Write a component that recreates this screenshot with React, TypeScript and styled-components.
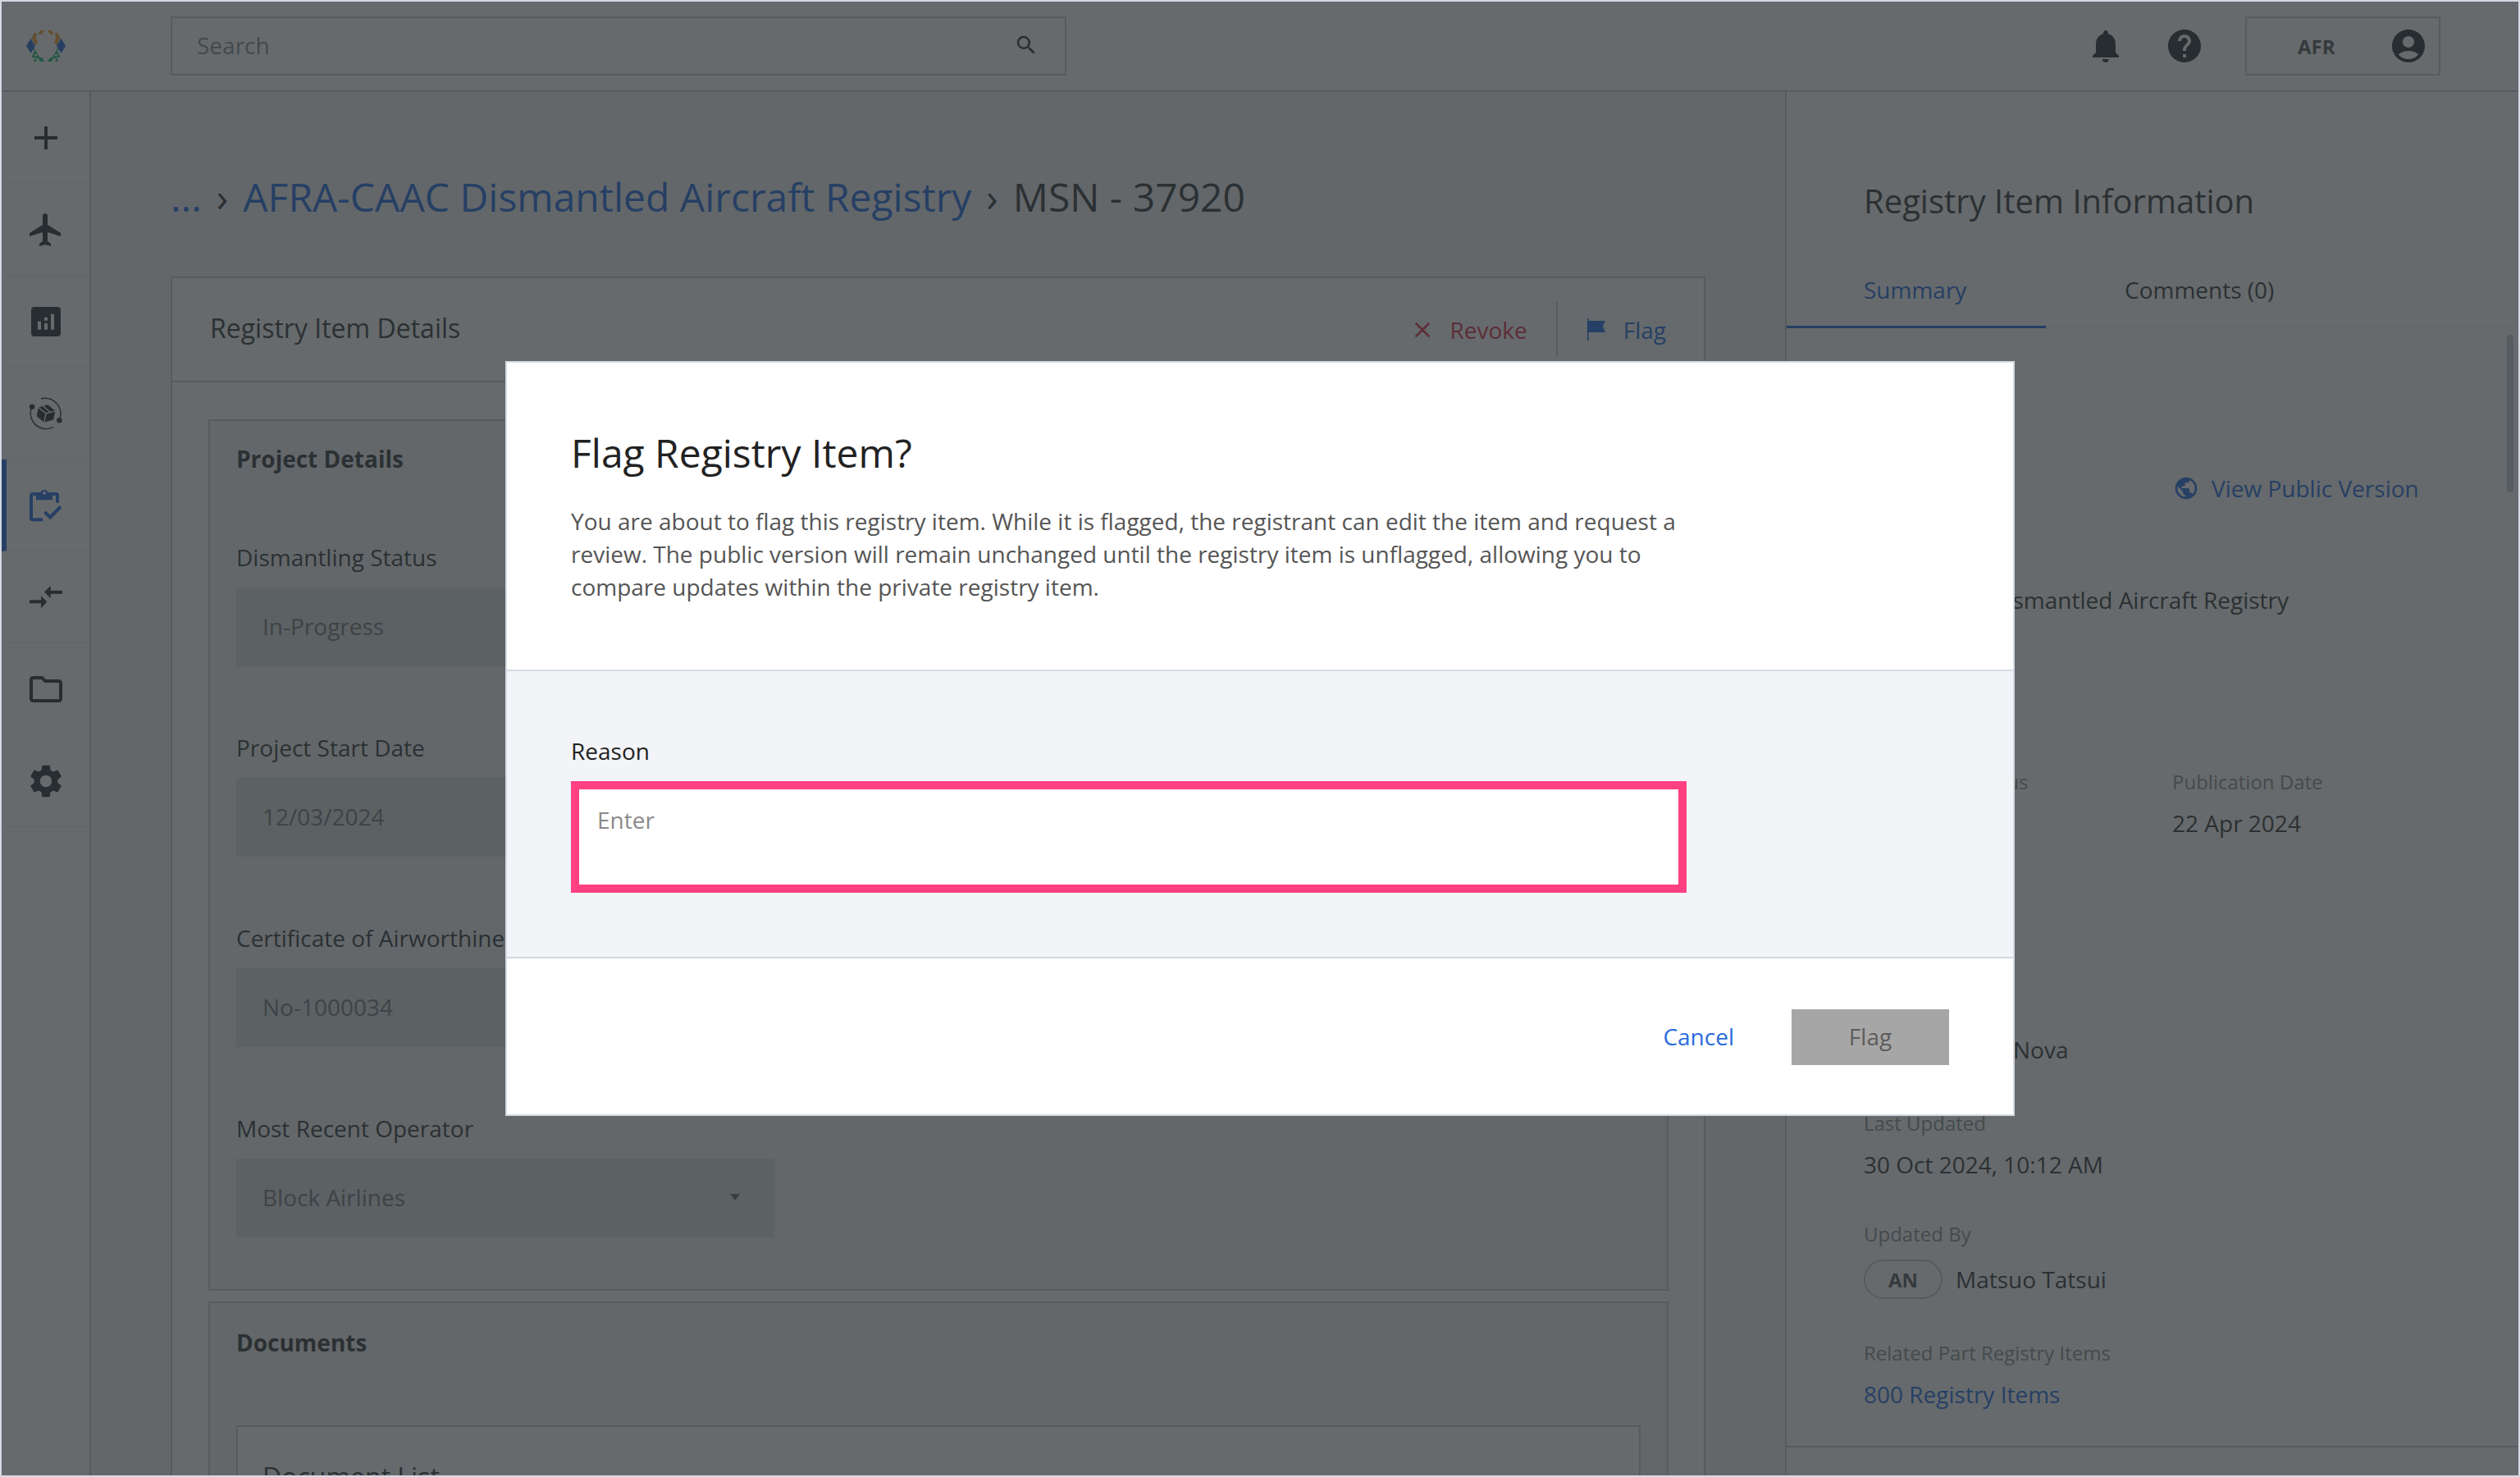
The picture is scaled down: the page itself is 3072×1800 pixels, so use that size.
import styled, { createGlobalStyle } from 'styled-components'
import {
  MdAdd,
  MdAccountCircle,
  MdClose,
  MdFlight,
  MdHelp,
  MdNotifications,
  MdOutlineFolder,
  MdPublic,
  MdSearch,
  MdSettings,
} from 'react-icons/md'

const Global = createGlobalStyle`
  html, body { margin: 0; padding: 0; background: #fff; }
  * { box-sizing: border-box; }
  body { font-family: "Open Sans", "Noto Sans", sans-serif; color: #3a3e42; }
`

const blue = '#2b70e4'
const line = '#c8ccd2'
const ink = '#3a3e42'
const iconInk = '#2e3236'

const Frame = styled.div`
  position: relative;
  width: 3072px;
  height: 1800px;
  border: 2px solid #d5d9e2;
  overflow: hidden;
  display: flex;
  flex-direction: column;
  background: #fff;
`

const TopBar = styled.header`
  height: 110px;
  flex: none;
  display: flex;
  align-items: center;
  padding: 0 95px 0 30px;
  border-bottom: 2px solid ${line};
`

const LogoBox = styled.div`
  width: 176px;
  display: flex;
  flex: none;
`

const SearchBox = styled.div`
  width: 1092px;
  height: 72px;
  border: 2px solid ${line};
  display: flex;
  align-items: center;
  justify-content: space-between;
  padding: 0 32px 2px 30px;
  font-size: 28px;
  color: #8d9196;
`

const TopActions = styled.div`
  margin-left: auto;
  display: flex;
  align-items: center;
`

const TopIcon = styled.span`
  display: flex;
  width: 48px;
  height: 48px;
  margin-right: 48px;
  color: ${iconInk};
`

const AccountBox = styled.div`
  width: 238px;
  height: 72px;
  margin-left: 2px;
  border: 2px solid ${line};
  display: flex;
  align-items: center;
  justify-content: space-between;
  padding: 0 13px 0 62px;
  font-size: 24px;
  font-weight: 700;
  color: #5c6064;
`

const Body = styled.div`
  flex: 1;
  display: flex;
  min-height: 0;
`

const SideBar = styled.nav`
  width: 109px;
  flex: none;
  border-right: 2px solid ${line};
`

const SideItem = styled.div<{ $active?: boolean }>`
  height: 112px;
  display: flex;
  align-items: center;
  justify-content: center;
  border-bottom: 1px solid #eceef1;
  border-left: 6px solid ${p => (p.$active ? blue : 'transparent')};
  padding-right: 6px;
  color: ${p => (p.$active ? blue : iconInk)};
`

const Main = styled.main`
  width: 2067px;
  flex: none;
  background: #f3f5f9;
  padding: 0 0 0 97px;
  border-right: 2px solid ${line};
  overflow: hidden;
`

const Crumbs = styled.div`
  height: 225px;
  display: flex;
  align-items: center;
  font-size: 48px;
  white-space: nowrap;
  color: ${ink};
  padding-top: 29px;
`

const CrumbLink = styled.span`
  color: ${blue};
`

const CrumbSep = styled.span`
  margin: 0 18px;
  font-size: 48px;
`

const Card = styled.section`
  width: 1871px;
  background: #fff;
  border: 2px solid ${line};
`

const CardHead = styled.div`
  height: 127px;
  display: flex;
  align-items: center;
  padding: 0 46px;
  border-bottom: 2px solid ${line};
  font-size: 32px;
  color: ${ink};
`

const CardTitle = styled.span`
  margin-right: auto;
  padding-bottom: 4px;
`

const HeadAction = styled.span<{ $color: string; $gap: number }>`
  display: flex;
  align-items: center;
  gap: ${p => p.$gap}px;
  font-size: 28px;
  color: ${p => p.$color};
`

const HeadDivider = styled.span`
  width: 2px;
  height: 67px;
  margin: 0 36px 0 35px;
  background: ${line};
`

const Section = styled.div`
  margin: 45px 0 0 44px;
  width: 1780px;
  background: #f3f5f9;
  border: 2px solid ${line};
  padding: 27px 32px 63px;
`

const SectionTwo = styled(Section)`
  margin-top: 13px;
  padding-top: 29px;
`

const SectionTitle = styled.div`
  font-size: 28px;
  font-weight: 700;
  line-height: 38px;
  color: ${ink};
`

const Field = styled.div`
  margin-top: 82px;
  & + & {
    margin-top: 80px;
  }
`

const Label = styled.div`
  font-size: 28px;
  line-height: 38px;
  color: ${ink};
  margin-bottom: 18px;
`

const Input = styled.div`
  width: 656px;
  height: 96px;
  background: #dcdfe3;
  display: flex;
  align-items: center;
  justify-content: space-between;
  padding: 0 32px 2px;
  font-size: 28px;
  color: #7a7e82;
`

const Caret = styled.span`
  width: 0;
  height: 0;
  border-left: 6px solid transparent;
  border-right: 6px solid transparent;
  border-top: 8px solid #6a6e72;
  margin-right: 10px;
`

const DocBox = styled.div`
  width: 1712px;
  margin-top: 82px;
  background: #fff;
  border: 2px solid ${line};
  padding: 39px 30px;
  font-size: 32px;
  line-height: 44px;
  color: ${ink};
`

const Aside = styled.aside`
  flex: 1;
  position: relative;
  padding-left: 94px;
  min-width: 0;
  overflow: hidden;
`

const AsideTitle = styled.h2`
  margin: 0;
  height: 174px;
  padding-top: 106px;
  font-size: 40px;
  line-height: 54px;
  font-weight: 400;
  color: ${ink};
`

const Tabs = styled.div`
  height: 113px;
  margin-left: -94px;
  display: flex;
  border-bottom: 1px solid #eceef2;
`

const Tab = styled.div<{ $active?: boolean }>`
  width: ${p => (p.$active ? '316px' : 'auto')};
  padding-left: ${p => (p.$active ? '94px' : '96px')};
  padding-top: 48px;
  font-size: 28px;
  line-height: 38px;
  height: 114px;
  color: ${p => (p.$active ? blue : ink)};
  border-bottom: ${p => (p.$active ? `3px solid ${blue}` : 'none')};
`

const ScrollThumb = styled.div`
  position: absolute;
  top: 296px;
  right: 6px;
  width: 8px;
  height: 192px;
  border-radius: 4px;
  background: #c9ccd2;
`

const PublicLink = styled.div`
  margin: 177px 0 0 377px;
  display: flex;
  align-items: center;
  gap: 15px;
  font-size: 28px;
  line-height: 38px;
  color: ${blue};
`

const RowValue = styled.div`
  font-size: 28px;
  line-height: 38px;
  color: ${ink};
`

const RegistryName = styled(RowValue)`
  margin-top: 98px;
`

const Pair = styled.div`
  margin-top: 186px;
  display: flex;
`

const PairCol = styled.div`
  width: 376px;
`

const SmallLabel = styled.div`
  font-size: 24px;
  line-height: 34px;
  color: #8f9397;
`

const NovaValue = styled(RowValue)`
  margin-top: 238px;
  padding-left: 182px;
`

const StackedValue = styled(RowValue)`
  margin-top: 14px;
`

const LinkValue = styled(StackedValue)`
  color: ${blue};
`

const Stack = styled.div`
  margin-top: 54px;
`

const Block = styled.div`
  margin-top: 49px;
`

const PersonRow = styled.div`
  display: flex;
  align-items: center;
  gap: 16px;
  margin-top: 14px;
`

const Initials = styled.span`
  width: 96px;
  height: 48px;
  border: 2px solid ${line};
  border-radius: 24px;
  display: flex;
  align-items: center;
  justify-content: center;
  font-size: 24px;
  font-weight: 700;
  color: #5c6064;
`

const AsideRule = styled.div`
  margin: 44px 0 0 -94px;
  height: 2px;
  background: ${line};
`

const Overlay = styled.div`
  position: absolute;
  inset: 0;
  background: rgba(37, 43, 46, 0.7);
  display: flex;
  align-items: center;
  justify-content: center;
`

const Dialog = styled.div`
  width: 1840px;
  height: 920px;
  background: #fff;
  border: 2px solid #d5d9e2;
  display: flex;
  flex-direction: column;
`

const DialogHead = styled.div`
  height: 376px;
  flex: none;
  padding: 77px 78px 0;
  border-bottom: 2px solid #d5d9e2;
`

const DialogTitle = styled.h1`
  margin: 0 0 30px;
  font-size: 48px;
  line-height: 66px;
  font-weight: 400;
  color: #222;
`

const DialogText = styled.p`
  margin: 0;
  width: 1400px;
  font-size: 28px;
  line-height: 40px;
  color: #555;
`

const DialogBody = styled.div`
  height: 350px;
  flex: none;
  background: #f2f4f8;
  padding: 78px 78px 0;
  border-bottom: 2px solid #d5d9e2;
`

const ReasonLabel = styled.div`
  font-size: 28px;
  line-height: 38px;
  color: #222;
  margin-bottom: 18px;
`

const ReasonBox = styled.div`
  width: 1360px;
  height: 136px;
  background: #fff;
  border: 10px solid #ff4081;
  padding: 18px 22px;
  font-size: 28px;
  line-height: 38px;
  color: #8a8a8a;
`

const DialogFoot = styled.div`
  flex: 1;
  display: flex;
  align-items: flex-start;
  justify-content: flex-end;
  padding: 62px 78px 0;
  gap: 70px;
`

const CancelLink = styled.span`
  font-size: 28px;
  line-height: 66px;
  color: #2a6bdc;
`

const FlagButton = styled.span`
  width: 192px;
  height: 68px;
  padding-bottom: 2px;
  background: #a6a6a6;
  display: flex;
  align-items: center;
  justify-content: center;
  font-size: 28px;
  color: #5c5c5c;
`

const ChartIcon = () => (
  <svg width="36" height="36" viewBox="0 0 36 36">
    <path
      fillRule="evenodd"
      fill="currentColor"
      d="M4 0h28a4 4 0 0 1 4 4v28a4 4 0 0 1-4 4H4a4 4 0 0 1-4-4V4a4 4 0 0 1 4-4zM8 17.700v10h4v-10zM16 12.700v4h4v-4zM16 20v7.700h4V20zM24 8.700v19h4v-19z"
    />
  </svg>
)

const PackageIcon = () => (
  <svg width="40" height="40" viewBox="0 0 40 40" fill="none">
    <path d="M3 11.700A19 19 0 0 0 29 36.500" stroke="currentColor" strokeWidth="1.400" />
    <path d="M14 2A19 19 0 0 1 37 26" stroke="currentColor" strokeWidth="1.400" />
    <circle cx="3" cy="11.700" r="3.300" fill="currentColor" />
    <circle cx="36.300" cy="28.300" r="3.300" fill="currentColor" />
    <g transform="rotate(12 20 20)">
      <path d="M20 9l10.500 5.500v11L20 31 9.500 25.500v-11z" fill="currentColor" />
      <path d="M9.500 14.500L20 20l10.500-5.500M20 20v11M14.500 11.800L25 17.300" stroke="#fff" strokeWidth="1.300" />
    </g>
  </svg>
)

const ClipboardIcon = () => (
  <svg width="40" height="40" viewBox="0 0 40 40" fill="none">
    <path
      d="M16 37.300H4a2 2 0 0 1-2-2V8a2 2 0 0 1 2-2h4M28 6h4a2 2 0 0 1 2 2v8.700"
      stroke="currentColor"
      strokeWidth="4"
    />
    <path
      fillRule="evenodd"
      fill="currentColor"
      d="M8 4h5.400a5 5 0 0 1 9.200 0H28v9.300H8zM18 3a2 2 0 1 0 0 4 2 2 0 0 0 0-4z"
    />
    <path d="M18.500 28l6.800 6.500L38 21.500" stroke="currentColor" strokeWidth="4" />
  </svg>
)

const CompareIcon = () => (
  <svg width="40" height="28" viewBox="0 0 40 28">
    <path
      fill="currentColor"
      d="M0 17.300h14v-5l7.300 7-7.300 8v-6H0zM40 5.700v4H25.700V15L18 7.500 25.700 0v5.700z"
    />
  </svg>
)

const FlagGlyph = () => (
  <svg width="22" height="27" viewBox="0 0 22 27">
    <path fill="currentColor" d="M0 0h1.600v3H22l-3 6.500 3 7.500H1.600v10H0z" />
  </svg>
)

const logoParts: { fill: string; d: string }[] = [
  { fill: '#f0a93c', d: 'M14 5l3-5h5l-3 5zM9 5l2-3 2 3zM6 9.500L9 5h4l-1 4.500 2 5-3 4-2-4.500z' },
  { fill: '#22c07a', d: 'M8 29l3-5 3 5zM5 24l3-5 3 5zM6 33l3-5 3 5zM11 34l3-5 3 5zM9 38l2-5 2 5zM14 33h5l3 5h-5z' },
  { fill: '#2a6fd6', d: 'M0 19l5.500-9L11 19l-5.500 9z' },
]

const LogoMark = () => (
  <svg width="48" height="38" viewBox="0 0 48 38">
    {logoParts.map(part => (
      <g key={part.fill} fill={part.fill}>
        <path d={part.d} />
        <path d={part.d} transform="matrix(-1 0 0 1 48 0)" />
      </g>
    ))}
  </svg>
)

const sideIcons = [
  <MdAdd size={48} />,
  <MdFlight size={48} />,
  <ChartIcon />,
  <PackageIcon />,
  <ClipboardIcon />,
  <CompareIcon />,
  <MdOutlineFolder size={48} />,
  <MdSettings size={48} />,
]

const fields = [
  { label: 'Dismantling Status', value: 'In-Progress' },
  { label: 'Project Start Date', value: '12/03/2024' },
  { label: 'Certificate of Airworthiness', value: 'No-1000034' },
  { label: 'Most Recent Operator', value: 'Block Airlines', select: true },
]

export default function App() {
  return (
    <Frame>
      <Global />
      <TopBar>
        <LogoBox>
          <LogoMark />
        </LogoBox>
        <SearchBox>
          Search
          <MdSearch size={30} color={iconInk} />
        </SearchBox>
        <TopActions>
          <TopIcon>
            <MdNotifications size={48} />
          </TopIcon>
          <TopIcon>
            <MdHelp size={48} />
          </TopIcon>
          <AccountBox>
            AFR
            <MdAccountCircle size={48} color={iconInk} />
          </AccountBox>
        </TopActions>
      </TopBar>
      <Body>
        <SideBar>
          {sideIcons.map((icon, i) => (
            <SideItem key={i} $active={i === 4}>
              {icon}
            </SideItem>
          ))}
        </SideBar>
        <Main>
          <Crumbs>
            <CrumbLink>...</CrumbLink>
            <CrumbSep>›</CrumbSep>
            <CrumbLink>AFRA-CAAC Dismantled Aircraft Registry</CrumbLink>
            <CrumbSep>›</CrumbSep>
            MSN - 37920
          </Crumbs>
          <Card>
            <CardHead>
              <CardTitle>Registry Item Details</CardTitle>
              <HeadAction $color="#e0304f" $gap={17}>
                <MdClose size={32} />
                Revoke
              </HeadAction>
              <HeadDivider />
              <HeadAction $color={blue} $gap={22}>
                <FlagGlyph />
                Flag
              </HeadAction>
            </CardHead>
            <Section>
              <SectionTitle>Project Details</SectionTitle>
              {fields.map(f => (
                <Field key={f.label}>
                  <Label>{f.label}</Label>
                  <Input>
                    {f.value}
                    {f.select && <Caret />}
                  </Input>
                </Field>
              ))}
            </Section>
            <SectionTwo>
              <SectionTitle>Documents</SectionTitle>
              <DocBox>Document List</DocBox>
            </SectionTwo>
          </Card>
        </Main>
        <Aside>
          <ScrollThumb />
          <AsideTitle>Registry Item Information</AsideTitle>
          <Tabs>
            <Tab $active>Summary</Tab>
            <Tab>Comments (0)</Tab>
          </Tabs>
          <PublicLink>
            <MdPublic size={32} />
            View Public Version
          </PublicLink>
          <RegistryName>AFRA-CAAC Dismantled Aircraft Registry</RegistryName>
          <Pair>
            <PairCol>
              <SmallLabel>Publication Status</SmallLabel>
              <StackedValue>Published</StackedValue>
            </PairCol>
            <PairCol>
              <SmallLabel>Publication Date</SmallLabel>
              <StackedValue>22 Apr 2024</StackedValue>
            </PairCol>
          </Pair>
          <NovaValue>Nova</NovaValue>
          <Stack>
            <SmallLabel>Last Updated</SmallLabel>
            <StackedValue>30 Oct 2024, 10:12 AM</StackedValue>
          </Stack>
          <Block>
            <SmallLabel>Updated By</SmallLabel>
            <PersonRow>
              <Initials>AN</Initials>
              <RowValue>Matsuo Tatsui</RowValue>
            </PersonRow>
          </Block>
          <Block>
            <SmallLabel>Related Part Registry Items</SmallLabel>
            <LinkValue>800 Registry Items</LinkValue>
          </Block>
          <AsideRule />
        </Aside>
      </Body>
      <Overlay>
        <Dialog>
          <DialogHead>
            <DialogTitle>Flag Registry Item?</DialogTitle>
            <DialogText>
              You are about to flag this registry item. While it is flagged, the registrant can edit the item and
              request a review. The public version will remain unchanged until the registry item is unflagged, allowing
              you to compare updates within the private registry item.
            </DialogText>
          </DialogHead>
          <DialogBody>
            <ReasonLabel>Reason</ReasonLabel>
            <ReasonBox>Enter</ReasonBox>
          </DialogBody>
          <DialogFoot>
            <CancelLink>Cancel</CancelLink>
            <FlagButton>Flag</FlagButton>
          </DialogFoot>
        </Dialog>
      </Overlay>
    </Frame>
  )
}
